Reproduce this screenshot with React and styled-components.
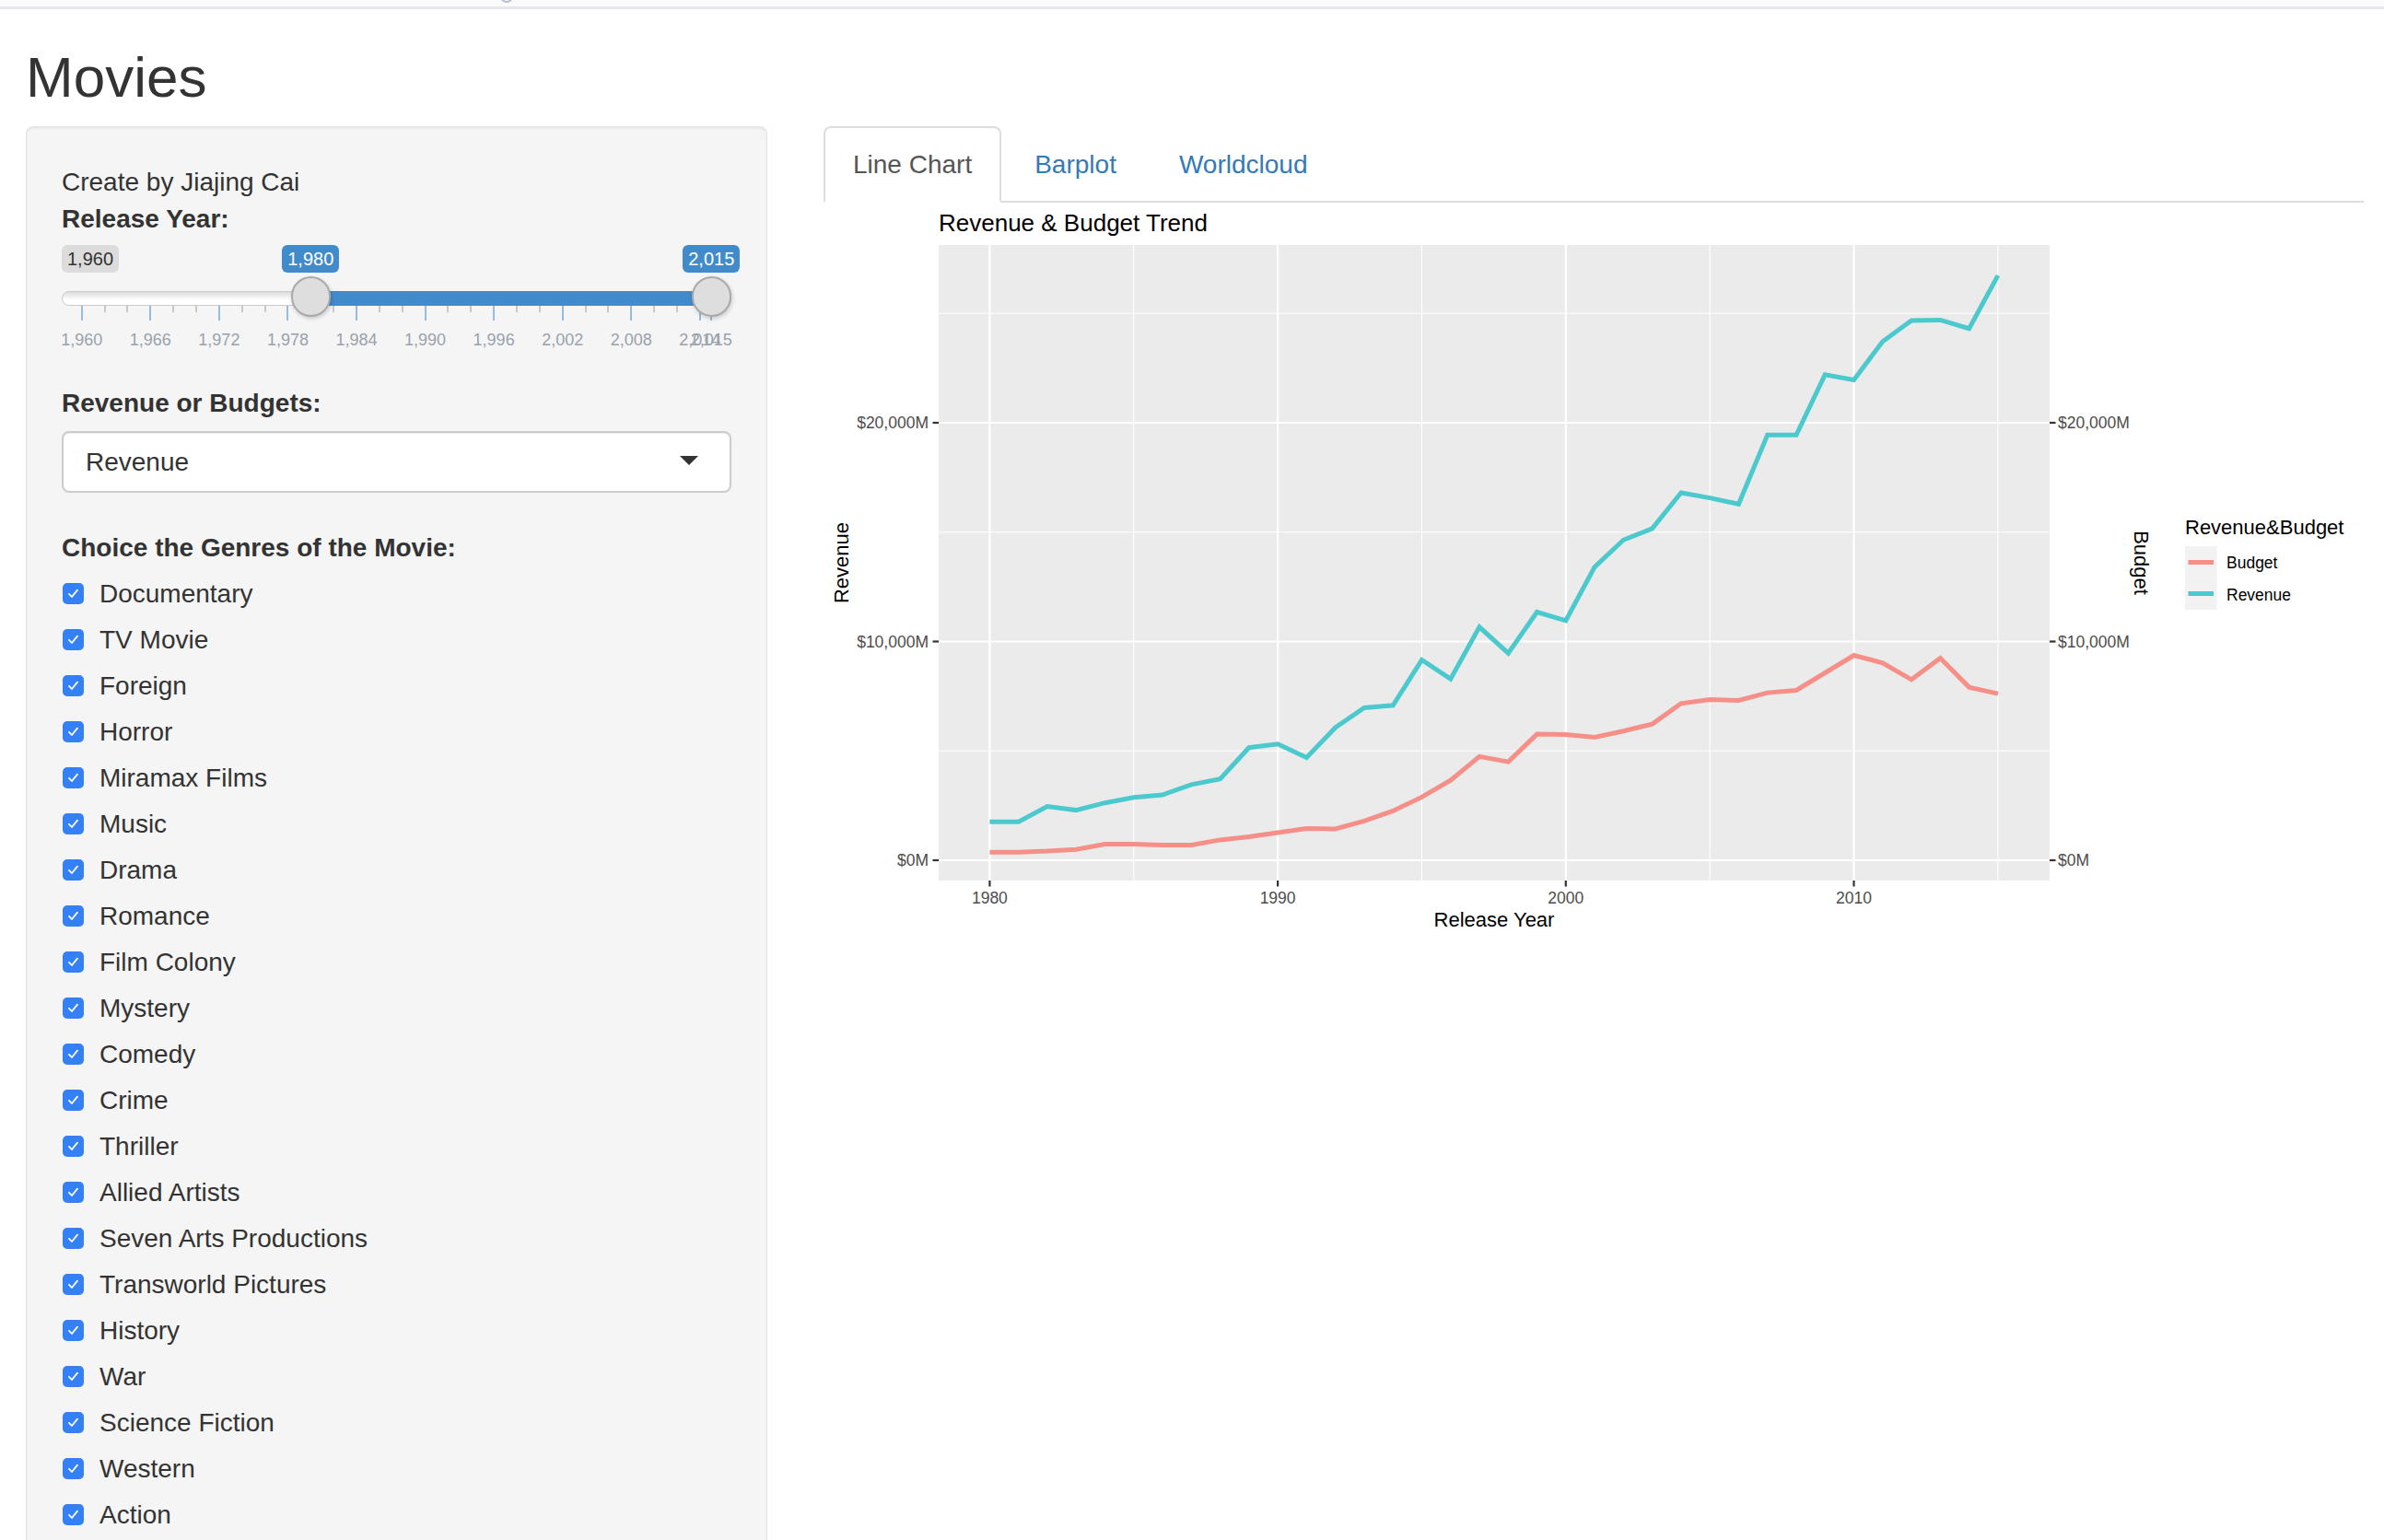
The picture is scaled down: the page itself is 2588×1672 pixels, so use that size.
import React from "react";
import styled, { createGlobalStyle } from "styled-components";

const GlobalStyle = createGlobalStyle`
  * { box-sizing: border-box; }
  html, body {
    margin: 0;
    padding: 0;
    overflow: hidden;
    background: #fff;
  }
  body {
    font-family: "Liberation Sans", Helvetica, Arial, sans-serif;
    font-size: 28px;
    line-height: 40px;
    color: #333;
  }
`;

const TopStrip = styled.div`
  position: relative;
  height: 10px;
  background: #fafafa;
  border-bottom: 3px solid #e8e8ec;
  overflow: hidden;
`;

const StripDot = styled.span`
  position: absolute;
  left: 543px;
  top: -11px;
  width: 14px;
  height: 14px;
  border-radius: 50%;
  border: 2px solid #b7bdcc;
`;

const Container = styled.div`
  padding: 0 22px 0 28px;
`;

const Title = styled.h2`
  margin: 41px 0 20px;
  font-size: 62px;
  line-height: 66px;
  font-weight: 400;
  color: #333;
`;

const Row = styled.div`
  display: flex;
  gap: 61px;
  align-items: flex-start;
`;

const SideCol = styled.div`
  flex: 0 0 805px;
`;

const MainCol = styled.div`
  flex: 1;
  min-width: 0;
`;

const Well = styled.div`
  background: #f5f5f5;
  border: 1px solid #e3e3e3;
  border-radius: 8px;
  padding: 40px 38px 38px;
  box-shadow: inset 0 2px 2px rgba(0, 0, 0, 0.05);
  margin-bottom: 40px;
`;

const FieldLabel = styled.div`
  font-weight: 700;
  margin-bottom: 10px;
`;

/* ---------- range slider ---------- */

const SliderWrap = styled.div`
  position: relative;
  height: 120px;
  margin: -2px 0 32px;
`;

const SliderLine = styled.div`
  position: absolute;
  left: 0;
  right: 0;
  top: 50px;
  height: 16px;
  border: 1px solid #cccccc;
  border-radius: 16px;
  background: linear-gradient(to bottom, #dcdcdc, #ffffff 60%);
`;

const SliderBar = styled.div`
  position: absolute;
  top: 50px;
  height: 16px;
  background: #428bca;
`;

const Handle = styled.div`
  position: absolute;
  top: 34px;
  width: 43.5px;
  height: 43.5px;
  border-radius: 50%;
  background: #dedede;
  border: 2px solid #aaaaaa;
  box-shadow: 1px 2px 4px rgba(0, 0, 0, 0.18);
`;

const Bubble = styled.span`
  position: absolute;
  top: 0;
  padding: 1px 6px;
  font-size: 20px;
  line-height: 28px;
  border-radius: 6px;
  white-space: nowrap;
  color: ${(p) => (p.$accent ? "#fff" : "#333")};
  background: ${(p) => (p.$accent ? "#428bca" : "rgba(0, 0, 0, 0.1)")};
  transform: ${(p) => (p.$centered ? "translateX(-50%)" : "none")};
`;

const GridTick = styled.span`
  position: absolute;
  top: 66px;
  width: 2px;
  margin-left: -1px;
  height: ${(p) => (p.$small ? "7px" : "16px")};
  background: ${(p) => (p.$small ? "#c8c8c8" : "#95bde0")};
`;

const GridText = styled.span`
  position: absolute;
  top: 93px;
  font-size: 18px;
  line-height: 20px;
  color: #99a2ac;
  white-space: nowrap;
  transform: translateX(-50%);
`;

const SLIDER_MIN = 1960;
const SLIDER_MAX = 2015;
const HANDLE = 43.5;

const slotLeft = (v) => {
  const p = (v - SLIDER_MIN) / (SLIDER_MAX - SLIDER_MIN);
  return `calc((100% - ${HANDLE}px) * ${p})`;
};
const slotCenter = (v) => {
  const p = (v - SLIDER_MIN) / (SLIDER_MAX - SLIDER_MIN);
  return `calc((100% - ${HANDLE}px) * ${p} + ${HANDLE / 2}px)`;
};

const fmt = (n) => n.toLocaleString("en-US");

function RangeSlider({ from, to }) {
  const majors = [];
  for (let y = SLIDER_MIN; y <= 2014; y += 6) majors.push(y);
  const minors = [];
  majors.slice(0, -1).forEach((y) => minors.push(y + 2, y + 4));

  return (
    <SliderWrap>
      <SliderLine />
      <SliderBar
        style={{
          left: slotCenter(from),
          width: `calc((100% - ${HANDLE}px) * ${(to - from) / (SLIDER_MAX - SLIDER_MIN)})`,
        }}
      />
      <Bubble>{fmt(SLIDER_MIN)}</Bubble>
      <Bubble $accent $centered style={{ left: slotCenter(from) }}>
        {fmt(from)}
      </Bubble>
      <Bubble $accent $centered style={{ left: slotCenter(to) }}>
        {fmt(to)}
      </Bubble>
      {minors.map((y) => (
        <GridTick key={`m${y}`} $small style={{ left: slotCenter(y) }} />
      ))}
      {[...majors, SLIDER_MAX].map((y) => (
        <GridTick key={`M${y}`} style={{ left: slotCenter(y) }} />
      ))}
      {[...majors, SLIDER_MAX].map((y) => (
        <GridText key={`t${y}`} style={{ left: slotCenter(y) }}>
          {fmt(y)}
        </GridText>
      ))}
      <Handle style={{ left: slotLeft(from) }} />
      <Handle style={{ left: slotLeft(to) }} />
    </SliderWrap>
  );
}

/* ---------- select ---------- */

const Select = styled.div`
  display: flex;
  align-items: center;
  justify-content: space-between;
  height: 67px;
  padding: 0 34px 0 24px;
  background: #fff;
  border: 2px solid #cccccc;
  border-radius: 8px;
  box-shadow: inset 0 1px 1px rgba(0, 0, 0, 0.075);
  margin-bottom: 40px;
  color: #333;
`;

const Caret = styled.span`
  width: 0;
  height: 0;
  margin-top: -4px;
  border-left: 10px solid transparent;
  border-right: 10px solid transparent;
  border-top: 10px solid #333;
`;

/* ---------- checkboxes ---------- */

const CheckList = styled.div`
  display: flex;
  flex-direction: column;
  gap: 10px;
`;

const CheckRow = styled.label`
  display: flex;
  align-items: flex-start;
  gap: 17px;
  line-height: 40px;
`;

const CheckBox = styled.span`
  flex: 0 0 23px;
  width: 23px;
  height: 23px;
  margin: 8px 0 0 1px;
  border-radius: 5px;
  background: #3480f6;
  display: flex;
  align-items: center;
  justify-content: center;
`;

const GENRES = [
  "Documentary",
  "TV Movie",
  "Foreign",
  "Horror",
  "Miramax Films",
  "Music",
  "Drama",
  "Romance",
  "Film Colony",
  "Mystery",
  "Comedy",
  "Crime",
  "Thriller",
  "Allied Artists",
  "Seven Arts Productions",
  "Transworld Pictures",
  "History",
  "War",
  "Science Fiction",
  "Western",
  "Action",
];

/* ---------- tabs ---------- */

const Tabs = styled.ul`
  display: flex;
  list-style: none;
  margin: 0;
  padding: 0;
  border-bottom: 2px solid #dddddd;
`;

const TabItem = styled.li`
  margin: 0 4px -2px 0;
`;

const TabLink = styled.a`
  display: block;
  padding: 20px 30px 19px;
  line-height: 40px;
  text-decoration: none;
  border: 2px solid ${(p) => (p.$active ? "#dddddd" : "transparent")};
  border-bottom-color: ${(p) => (p.$active ? "#ffffff" : "transparent")};
  border-radius: 8px 8px 0 0;
  background: ${(p) => (p.$active ? "#fff" : "transparent")};
  color: ${(p) => (p.$active ? "#555555" : "#337ab7")};
  cursor: pointer;
`;

/* ---------- chart ---------- */

const ChartSvg = styled.svg`
  display: block;
  width: 1672px;
  height: 800px;
  font-family: "Liberation Sans", Arial, sans-serif;
`;

const PlotTitle = styled.text`
  font-size: 26px;
  fill: #000;
`;

const AxisTitle = styled.text`
  font-size: 22px;
  fill: #000;
`;

const TickText = styled.text`
  font-size: 17.5px;
  fill: #4d4d4d;
`;

const LegendText = styled.text`
  font-size: 17.5px;
  fill: #000;
`;

const REVENUE = [
  1761, 1761, 2458, 2292, 2625, 2874, 2990, 3455, 3721, 5150, 5316, 4700, 6068,
  6967, 7083, 9158, 8289, 10660, 9467, 11346, 10954, 13408, 14642, 15161, 16802,
  16564, 16283, 19439, 19439, 22202, 21964, 23717, 24670, 24698, 24306, 26732,
];

const BUDGET = [
  365, 365, 415, 498, 731, 731, 698, 698, 930, 1080, 1262, 1452, 1437, 1793, 2258,
  2889, 3661, 4741, 4502, 5764, 5750, 5624, 5905, 6227, 7167, 7349, 7307, 7658,
  7770, 8569, 9369, 9018, 8261, 9243, 7910, 7616,
];

const PANEL = { x0: 1019, x1: 2225, y0: 266, y1: 956 };
const px = (yr) => 1074.4 + (yr - 1980) * 31.27;
const py = (v) => 934 - v * 0.02375;
const points = (vals) =>
  vals.map((v, i) => `${px(1980 + i).toFixed(1)},${py(v).toFixed(1)}`).join(" ");

const TEAL = "#4cc9cd";
const PINK = "#f58f88";

function TrendChart() {
  const yMajor = [0, 10000, 20000];
  const yMinor = [5000, 15000, 25000];
  const xMajor = [1980, 1990, 2000, 2010];
  const xMinor = [1985, 1995, 2005, 2015];
  const money = (v) => `$${fmt(v)}M`;

  return (
    <ChartSvg viewBox="0 0 1672 800">
      <g transform="translate(-894,-220)">
        <PlotTitle x={1019} y={250.5}>
          Revenue &amp; Budget Trend
        </PlotTitle>

        <rect
          x={PANEL.x0}
          y={PANEL.y0}
          width={PANEL.x1 - PANEL.x0}
          height={PANEL.y1 - PANEL.y0}
          fill="#ebebeb"
        />
        {yMinor.map((v) => (
          <line key={`ym${v}`} x1={PANEL.x0} x2={PANEL.x1} y1={py(v)} y2={py(v)} stroke="#fff" strokeWidth={1.1} />
        ))}
        {xMinor.map((y) => (
          <line key={`xm${y}`} x1={px(y)} x2={px(y)} y1={PANEL.y0} y2={PANEL.y1} stroke="#fff" strokeWidth={1.1} />
        ))}
        {yMajor.map((v) => (
          <line key={`yM${v}`} x1={PANEL.x0} x2={PANEL.x1} y1={py(v)} y2={py(v)} stroke="#fff" strokeWidth={2.2} />
        ))}
        {xMajor.map((y) => (
          <line key={`xM${y}`} x1={px(y)} x2={px(y)} y1={PANEL.y0} y2={PANEL.y1} stroke="#fff" strokeWidth={2.2} />
        ))}

        <polyline points={points(BUDGET)} fill="none" stroke={PINK} strokeWidth={5} strokeLinejoin="miter" />
        <polyline points={points(REVENUE)} fill="none" stroke={TEAL} strokeWidth={5} strokeLinejoin="miter" />

        {yMajor.map((v) => (
          <g key={`ay${v}`}>
            <line x1={1012.5} x2={PANEL.x0} y1={py(v)} y2={py(v)} stroke="#333" strokeWidth={2.2} />
            <TickText x={1008} y={py(v) + 6.3} textAnchor="end">
              {money(v)}
            </TickText>
            <line x1={PANEL.x1} x2={2231.5} y1={py(v)} y2={py(v)} stroke="#333" strokeWidth={2.2} />
            <TickText x={2234} y={py(v) + 6.3}>
              {money(v)}
            </TickText>
          </g>
        ))}
        {xMajor.map((y) => (
          <g key={`ax${y}`}>
            <line x1={px(y)} x2={px(y)} y1={PANEL.y1} y2={962.5} stroke="#333" strokeWidth={2.2} />
            <TickText x={px(y)} y={980.5} textAnchor="middle">
              {y}
            </TickText>
          </g>
        ))}

        <AxisTitle x={(PANEL.x0 + PANEL.x1) / 2} y={1006} textAnchor="middle">
          Release Year
        </AxisTitle>
        <AxisTitle transform="translate(921,611) rotate(-90)" textAnchor="middle">
          Revenue
        </AxisTitle>
        <AxisTitle transform="translate(2317,611) rotate(90)" textAnchor="middle">
          Budget
        </AxisTitle>

        <AxisTitle x={2372} y={580}>
          Revenue&amp;Budget
        </AxisTitle>
        <rect x={2372} y={593} width={34.5} height={34.5} fill="#f2f2f2" />
        <rect x={2372} y={627.5} width={34.5} height={34.5} fill="#f2f2f2" />
        <line x1={2375.5} x2={2403} y1={610.5} y2={610.5} stroke={PINK} strokeWidth={5} />
        <line x1={2375.5} x2={2403} y1={644.5} y2={644.5} stroke={TEAL} strokeWidth={5} />
        <LegendText x={2417} y={617}>
          Budget
        </LegendText>
        <LegendText x={2417} y={651.5}>
          Revenue
        </LegendText>
      </g>
    </ChartSvg>
  );
}

export default function App() {
  return (
    <>
      <GlobalStyle />
      <TopStrip>
        <StripDot />
      </TopStrip>
      <Container>
        <Title>Movies</Title>
        <Row>
          <SideCol>
            <Well>
              <div>Create by Jiajing Cai</div>
              <FieldLabel>Release Year:</FieldLabel>
              <RangeSlider from={1980} to={2015} />

              <FieldLabel>Revenue or Budgets:</FieldLabel>
              <Select>
                <span>Revenue</span>
                <Caret />
              </Select>

              <FieldLabel>Choice the Genres of the Movie:</FieldLabel>
              <CheckList>
                {GENRES.map((g) => (
                  <CheckRow key={g}>
                    <CheckBox>
                      <svg width="15" height="15" viewBox="0 0 15 15">
                        <path
                          d="M3 7.8 L6 11 L12 3.6"
                          fill="none"
                          stroke="#fff"
                          strokeWidth="1.8"
                          strokeLinecap="round"
                          strokeLinejoin="round"
                        />
                      </svg>
                    </CheckBox>
                    <span>{g}</span>
                  </CheckRow>
                ))}
              </CheckList>
            </Well>
          </SideCol>

          <MainCol>
            <Tabs>
              <TabItem>
                <TabLink $active>Line Chart</TabLink>
              </TabItem>
              <TabItem>
                <TabLink>Barplot</TabLink>
              </TabItem>
              <TabItem>
                <TabLink>Worldcloud</TabLink>
              </TabItem>
            </Tabs>
            <TrendChart />
          </MainCol>
        </Row>
      </Container>
    </>
  );
}
